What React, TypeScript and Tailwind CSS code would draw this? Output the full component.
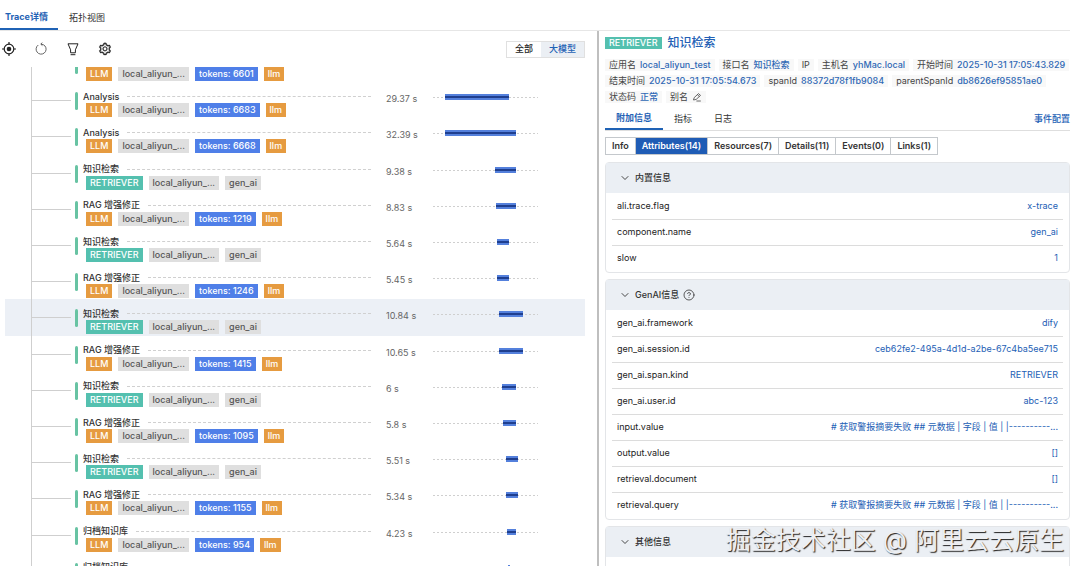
import { AiOutlineSetting } from "react-icons/ai";
import { ChevronDown, CircleHelp } from "lucide-react";

type Span = {
  name: string;
  kind: "LLM" | "RETRIEVER";
  tokens?: number;
  duration: string;
  start: number;
  end: number;
  active?: boolean;
};

// start / end are positions on the 105 unit wide timeline
const SCALE = 105;

const spans: Span[] = [
  { name: "Analysis", kind: "LLM", tokens: 6601, duration: "28.12 s", start: 12, end: 76 },
  { name: "Analysis", kind: "LLM", tokens: 6683, duration: "29.37 s", start: 12, end: 76 },
  { name: "Analysis", kind: "LLM", tokens: 6668, duration: "32.39 s", start: 12, end: 83 },
  { name: "知识检索", kind: "RETRIEVER", duration: "9.38 s", start: 62, end: 83 },
  { name: "RAG 增强修正", kind: "LLM", tokens: 1219, duration: "8.83 s", start: 63, end: 83 },
  { name: "知识检索", kind: "RETRIEVER", duration: "5.64 s", start: 64, end: 76 },
  { name: "RAG 增强修正", kind: "LLM", tokens: 1246, duration: "5.45 s", start: 64, end: 76 },
  { name: "知识检索", kind: "RETRIEVER", duration: "10.84 s", start: 66, end: 90, active: true },
  { name: "RAG 增强修正", kind: "LLM", tokens: 1415, duration: "10.65 s", start: 66, end: 90 },
  { name: "知识检索", kind: "RETRIEVER", duration: "6 s", start: 69, end: 83 },
  { name: "RAG 增强修正", kind: "LLM", tokens: 1095, duration: "5.8 s", start: 70, end: 83 },
  { name: "知识检索", kind: "RETRIEVER", duration: "5.51 s", start: 73, end: 85 },
  { name: "RAG 增强修正", kind: "LLM", tokens: 1155, duration: "5.34 s", start: 73, end: 85 },
  { name: "归档知识库", kind: "LLM", tokens: 954, duration: "4.23 s", start: 74, end: 83 },
  { name: "归档知识库", kind: "LLM", tokens: 954, duration: "4.1 s", start: 75, end: 77 },
];

const meta: [string, string][][] = [
  [
    ["应用名", "local_aliyun_test"],
    ["接口名", "知识检索"],
    ["IP", ""],
    ["主机名", "yhMac.local"],
    ["开始时间", "2025-10-31 17:05:43.829"],
  ],
  [
    ["结束时间", "2025-10-31 17:05:54.673"],
    ["spanId", "88372d78f1fb9084"],
    ["parentSpanId", "db8626ef95851ae0"],
  ],
  [
    ["状态码", "正常"],
    ["别名", ""],
  ],
];

const builtin: [string, string][] = [
  ["ali.trace.flag", "x-trace"],
  ["component.name", "gen_ai"],
  ["slow", "1"],
];

const digest = "# 获取警报摘要失败 ## 元数据 | 字段 | 值 | |----------...";

const genai: [string, string][] = [
  ["gen_ai.framework", "dify"],
  ["gen_ai.session.id", "ceb62fe2-495a-4d1d-a2be-67c4ba5ee715"],
  ["gen_ai.span.kind", "RETRIEVER"],
  ["gen_ai.user.id", "abc-123"],
  ["input.value", digest],
  ["output.value", "[]"],
  ["retrieval.document", "[]"],
  ["retrieval.query", digest],
];

const views = ["Info", "Attributes(14)", "Resources(7)", "Details(11)", "Events(0)", "Links(1)"];

function LocateIcon() {
  return (
    <svg viewBox="0 0 14 14" className="size-3.5" fill="none" stroke="currentColor" strokeWidth="1.2">
      <circle cx="7" cy="7" r="4.8" />
      <circle cx="7" cy="7" r="2.3" fill="currentColor" stroke="none" />
      <path d="M7 0v2.6M7 11.4V14M0 7h2.6M11.4 7H14" />
    </svg>
  );
}

function ReloadIcon() {
  return (
    <svg viewBox="0 0 14 14" className="size-3.5 text-[#555]" fill="none" stroke="currentColor" strokeWidth="0.9">
      <path d="M4.3 3A5 5 0 1 0 11 4" />
      <path d="M7 2.2A5 5 0 0 1 11 4M8.200 .600L6.800 2.200L8.400 3.600" />
    </svg>
  );
}

function FilterIcon() {
  return (
    <svg viewBox="0 0 14 14" className="size-3.5" fill="none" stroke="currentColor">
      <path d="M2 1.800h10L9.400 7.800v3H4.600v-3z" />
      <path d="M4.600 12.700h4.800" />
    </svg>
  );
}

function EditIcon() {
  return (
    <svg viewBox="0 0 10 10" className="size-2.5" fill="none" stroke="currentColor" strokeWidth="0.8">
      <path d="M1.500 8l.7-2.400L6.500 1.600l2 1.800-4.300 4z" />
      <path d="M5.400 2.700l2 1.800M4.400 9h4.400" />
    </svg>
  );
}

function SpanRow({ span }: { span: Span }) {
  const llm = span.kind === "LLM";
  return (
    <li className={`flex flex-1 min-h-0 items-start ${span.active ? "bg-[#ecf0f6]" : ""}`}>
      <div className="ml-[26px] w-11 h-full border-l border-[#cfcfcf]">
        <div className="w-[39px] h-[19px] border-b border-[#cfcfcf]" />
      </div>
      <div className="mt-2.5 w-[3px] h-[18px] rounded-full bg-[#68c3a3]" />
      <div className="ml-[5px] flex-1 min-w-0 pt-2">
        <div className="flex items-center gap-2 h-[13px]">
          <span className="font-medium text-[#333] whitespace-nowrap">{span.name}</span>
          <i className="flex-1 border-t border-dashed border-[#d0d0d0]" />
        </div>
        <div className="ml-[3px] flex gap-1.5 font-medium leading-[14px] whitespace-nowrap">
          <span className={`px-1 text-white ${llm ? "bg-[#e69b40]" : "bg-[#54c0af]"}`}>{span.kind}</span>
          <span className="px-1 bg-[#dfdfdf] text-[#555]">local_aliyun_...</span>
          {llm ? (
            <>
              <span className="px-1 bg-[#4f7fe8] text-white">tokens: {span.tokens}</span>
              <span className="px-1 bg-[#e69b40] text-white">llm</span>
            </>
          ) : (
            <span className="px-1 bg-[#dfdfdf] text-[#555]">gen_ai</span>
          )}
        </div>
      </div>
      <div className="ml-[15px] mt-[11px] w-[47px] leading-3 text-[#666]">{span.duration}</div>
      <div className="mt-3 mr-[47px] w-[105px] h-[6px] bg-[linear-gradient(90deg,#cfcfcf_60%,transparent_60%)] bg-[length:4px_1px] bg-[position:0_3px] bg-repeat-x">
        <div
          className="h-[6px] bg-[#1f3f8f] border-y-2 border-[#5480dc]"
          style={{
            marginLeft: `${(span.start / SCALE) * 100}%`,
            width: `${((span.end - span.start) / SCALE) * 100}%`,
          }}
        />
      </div>
    </li>
  );
}

function Section({ title, rows, help }: { title: string; rows: [string, string][]; help?: boolean }) {
  return (
    <section className="rounded-sm border border-[#e3e5e8] shrink-0">
      <button className="flex w-full h-[30px] items-center gap-1 bg-[#ebeff4] pl-[13px] font-medium text-[#333]">
        <ChevronDown className="size-3" strokeWidth={1.8} />
        {title}
        {help && <CircleHelp className="size-3" strokeWidth={1.6} />}
      </button>
      <div className="min-h-3 px-1.5 pb-px">
        <table className="w-full">
          <tbody>
            {rows.map(([key, value]) => (
              <tr key={key} className="h-[26px] border-b border-[#dcdcdc] last:border-b-0">
                <th scope="row" className="pl-[5px] text-left font-normal text-[#222]">
                  {key}
                </th>
                <td className="pr-[5px] text-right text-[#2360b5]">{value}</td>
              </tr>
            ))}
          </tbody>
        </table>
      </div>
    </section>
  );
}

export default function App() {
  return (
    <div className="relative flex flex-col h-screen pb-1 overflow-hidden bg-white font-['Inter','Noto_Sans_CJK_SC',sans-serif] text-[9px] leading-3 text-[#333]">
      <nav className="mr-2.5 flex h-[31px] shrink-0 border-b border-[#e6e6e6]">
        <button className="w-[58px] pt-1.5 pl-[5px] border-b-2 border-[#1f62b5] text-left font-bold text-[#1f62b5] whitespace-nowrap">
          Trace详情
        </button>
        <button className="px-[11px] pt-1.5">拓扑视图</button>
      </nav>

      <div className="grid flex-1 min-h-0 grid-cols-[599fr_481fr]">
        <div className="flex min-w-0 min-h-0 flex-col border-r-2 border-[#bfbfbf]">
          <div className="flex h-9 shrink-0 items-center pl-0.5 pr-3">
            <div className="flex gap-[18px] text-[#222]">
              <button aria-label="定位"><LocateIcon /></button>
              <button aria-label="刷新"><ReloadIcon /></button>
              <button aria-label="筛选"><FilterIcon /></button>
              <button aria-label="设置"><AiOutlineSetting className="size-3.5" stroke="currentColor" strokeWidth={20} /></button>
            </div>
            <div className="ml-auto flex h-[17px] border border-[#e0e0e0] font-medium">
              <button className="px-2 text-[#222]">全部</button>
              <button className="px-2 bg-[#ebeff4] text-[#1f62b5]">大模型</button>
            </div>
          </div>
          <div className="flex-1 min-h-0 overflow-hidden">
            <ul className="-mt-[21px] ml-[5px] mr-3 flex h-[543px] flex-col">
              {spans.map((span, i) => (
                <SpanRow key={i} span={span} />
              ))}
            </ul>
          </div>
        </div>

        <div className="flex min-w-0 min-h-0 flex-col overflow-hidden pl-1.5 pr-2.5 pt-1.5">
          <div className="flex h-3 shrink-0 items-center gap-1.5">
            <span className="px-1 leading-3 bg-[#54c0af] text-white font-medium">RETRIEVER</span>
            <h1 className="text-[12px] font-medium text-[#2360b5]">知识检索</h1>
          </div>
          <div className="mt-2.5 flex shrink-0 flex-col gap-1">
            {meta.map((line, i) => (
              <div key={i} className="flex gap-1 whitespace-nowrap">
                {line.map(([label, value]) => (
                  <span key={label} className="flex items-center gap-1 bg-[#f8f8f8] px-1 text-[#444]">
                    {label}
                    {value && <span className="font-medium text-[#2f68b5]">{value}</span>}
                    {label === "别名" && <EditIcon />}
                  </span>
                ))}
              </div>
            ))}
          </div>
          <div className="flex h-7 shrink-0 border-b border-[#dedede]">
            <button className="w-[58px] pt-1 border-b-2 border-[#1f62b5] font-bold text-[#1f62b5]">附加信息</button>
            <button className="px-[11px] pt-1">指标</button>
            <button className="px-[11px] pt-1">日志</button>
            <a href="#events" className="ml-auto self-center pt-1 font-medium text-[#2360b5]">事件配置</a>
          </div>
          <div className="mt-1.5 flex h-[18px] w-fit shrink-0 divide-x divide-[#c4c8cc] border border-[#c4c8cc] font-semibold">
            {views.map((view) => (
              <button
                key={view}
                className={view === "Attributes(14)" ? "px-1.5 bg-[#1f5cb5] text-white" : "px-1.5 text-[#333]"}
              >
                {view}
              </button>
            ))}
          </div>
          <div className="mt-[7px] flex flex-col gap-1.5">
            <Section title="内置信息" rows={builtin} />
            <Section title="GenAI信息" rows={genai} help />
            <Section title="其他信息" rows={[]} />
          </div>
        </div>
      </div>

      <div className="absolute right-4 bottom-3 text-[25px] leading-9 text-[#eeeff2] [text-shadow:1px_1px_1px_#222] pointer-events-none">
        掘金技术社区 @ 阿里云云原生
      </div>
    </div>
  );
}
